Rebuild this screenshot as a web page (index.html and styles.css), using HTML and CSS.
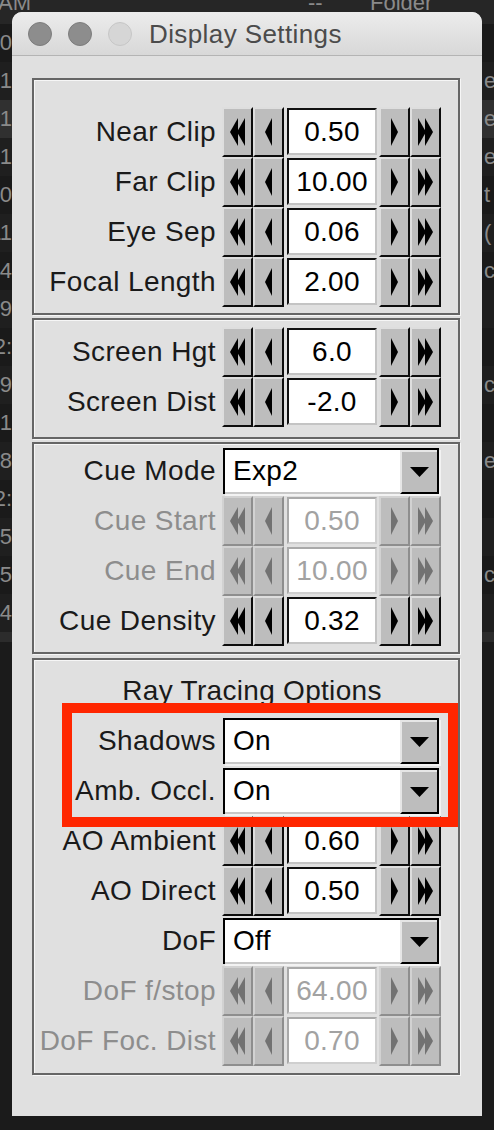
FILE: index.html
```html
<!DOCTYPE html>
<html>
<head>
<meta charset="utf-8">
<link rel="stylesheet" href="styles.css">
</head>
<body>
<div class="desktop">
  <div class="hdr"><span class="h-am">AM</span><span class="h-dash">--</span><span class="h-folder">Folder</span></div>
  <div class="bgrow alt"><div class="lc"><span>12:0</span></div><div class="sp"></div><div class="rc"></div></div>
  <div class="bgrow"><div class="lc"><span>1</span></div><div class="sp"></div><div class="rc">e</div></div>
  <div class="bgrow sel"><div class="lc"><span>1</span></div><div class="sp"></div><div class="rc">e</div></div>
  <div class="bgrow"><div class="lc"><span>1</span></div><div class="sp"></div><div class="rc">e</div></div>
  <div class="bgrow alt"><div class="lc"><span>0</span></div><div class="sp"></div><div class="rc">t</div></div>
  <div class="bgrow"><div class="lc"><span>11</span></div><div class="sp"></div><div class="rc">(</div></div>
  <div class="bgrow alt"><div class="lc"><span>4</span></div><div class="sp"></div><div class="rc">cu</div></div>
  <div class="bgrow"><div class="lc"><span>9</span></div><div class="sp"></div><div class="rc"></div></div>
  <div class="bgrow alt"><div class="lc"><span>2:</span></div><div class="sp"></div><div class="rc"></div></div>
  <div class="bgrow"><div class="lc"><span>9</span></div><div class="sp"></div><div class="rc">c</div></div>
  <div class="bgrow alt"><div class="lc"><span>1</span></div><div class="sp"></div><div class="rc"></div></div>
  <div class="bgrow"><div class="lc"><span>8</span></div><div class="sp"></div><div class="rc">e</div></div>
  <div class="bgrow alt"><div class="lc"><span>2:</span></div><div class="sp"></div><div class="rc"></div></div>
  <div class="bgrow"><div class="lc"><span>:5</span></div><div class="sp"></div><div class="rc"></div></div>
  <div class="bgrow alt"><div class="lc"><span>5</span></div><div class="sp"></div><div class="rc">cu</div></div>
  <div class="bgrow"><div class="lc"><span>:4</span></div><div class="sp"></div><div class="rc"></div></div>
  <div class="hbar"></div>
  <div class="lower"><div class="col1"></div><div class="col2"></div></div>
</div>

<div class="window">
  <div class="titlebar">
    <span class="light dark"></span>
    <span class="light dark"></span>
    <span class="light pale"></span>
    <span class="wtitle">Display Settings</span>
  </div>
  <div class="content">
    <div class="sec s1">
      <div class="row">
        <span class="lbl">Near Clip</span>
        <div class="spin">
          <span class="btn"><svg width="15" height="28" viewBox="0 0 15 28"><polygon points="0,14 8,0 8,28"/><polygon points="7,14 15,0 15,28"/></svg></span>
          <span class="btn"><svg width="7" height="28" viewBox="0 0 7 28"><polygon points="0,14 7,0 7,28"/></svg></span>
          <span class="val">0.50</span>
          <span class="btn"><svg width="7" height="28" viewBox="0 0 7 28"><polygon points="7,14 0,0 0,28"/></svg></span>
          <span class="btn"><svg width="15" height="28" viewBox="0 0 15 28"><polygon points="15,14 7,0 7,28"/><polygon points="8,14 0,0 0,28"/></svg></span>
        </div>
      </div>
      <div class="row">
        <span class="lbl">Far Clip</span>
        <div class="spin">
          <span class="btn"><svg width="15" height="28" viewBox="0 0 15 28"><polygon points="0,14 8,0 8,28"/><polygon points="7,14 15,0 15,28"/></svg></span>
          <span class="btn"><svg width="7" height="28" viewBox="0 0 7 28"><polygon points="0,14 7,0 7,28"/></svg></span>
          <span class="val">10.00</span>
          <span class="btn"><svg width="7" height="28" viewBox="0 0 7 28"><polygon points="7,14 0,0 0,28"/></svg></span>
          <span class="btn"><svg width="15" height="28" viewBox="0 0 15 28"><polygon points="15,14 7,0 7,28"/><polygon points="8,14 0,0 0,28"/></svg></span>
        </div>
      </div>
      <div class="row">
        <span class="lbl">Eye Sep</span>
        <div class="spin">
          <span class="btn"><svg width="15" height="28" viewBox="0 0 15 28"><polygon points="0,14 8,0 8,28"/><polygon points="7,14 15,0 15,28"/></svg></span>
          <span class="btn"><svg width="7" height="28" viewBox="0 0 7 28"><polygon points="0,14 7,0 7,28"/></svg></span>
          <span class="val">0.06</span>
          <span class="btn"><svg width="7" height="28" viewBox="0 0 7 28"><polygon points="7,14 0,0 0,28"/></svg></span>
          <span class="btn"><svg width="15" height="28" viewBox="0 0 15 28"><polygon points="15,14 7,0 7,28"/><polygon points="8,14 0,0 0,28"/></svg></span>
        </div>
      </div>
      <div class="row">
        <span class="lbl">Focal Length</span>
        <div class="spin">
          <span class="btn"><svg width="15" height="28" viewBox="0 0 15 28"><polygon points="0,14 8,0 8,28"/><polygon points="7,14 15,0 15,28"/></svg></span>
          <span class="btn"><svg width="7" height="28" viewBox="0 0 7 28"><polygon points="0,14 7,0 7,28"/></svg></span>
          <span class="val">2.00</span>
          <span class="btn"><svg width="7" height="28" viewBox="0 0 7 28"><polygon points="7,14 0,0 0,28"/></svg></span>
          <span class="btn"><svg width="15" height="28" viewBox="0 0 15 28"><polygon points="15,14 7,0 7,28"/><polygon points="8,14 0,0 0,28"/></svg></span>
        </div>
      </div>
    </div>

    <div class="sec s2">
      <div class="row">
        <span class="lbl">Screen Hgt</span>
        <div class="spin">
          <span class="btn"><svg width="15" height="28" viewBox="0 0 15 28"><polygon points="0,14 8,0 8,28"/><polygon points="7,14 15,0 15,28"/></svg></span>
          <span class="btn"><svg width="7" height="28" viewBox="0 0 7 28"><polygon points="0,14 7,0 7,28"/></svg></span>
          <span class="val">6.0</span>
          <span class="btn"><svg width="7" height="28" viewBox="0 0 7 28"><polygon points="7,14 0,0 0,28"/></svg></span>
          <span class="btn"><svg width="15" height="28" viewBox="0 0 15 28"><polygon points="15,14 7,0 7,28"/><polygon points="8,14 0,0 0,28"/></svg></span>
        </div>
      </div>
      <div class="row">
        <span class="lbl">Screen Dist</span>
        <div class="spin">
          <span class="btn"><svg width="15" height="28" viewBox="0 0 15 28"><polygon points="0,14 8,0 8,28"/><polygon points="7,14 15,0 15,28"/></svg></span>
          <span class="btn"><svg width="7" height="28" viewBox="0 0 7 28"><polygon points="0,14 7,0 7,28"/></svg></span>
          <span class="val">-2.0</span>
          <span class="btn"><svg width="7" height="28" viewBox="0 0 7 28"><polygon points="7,14 0,0 0,28"/></svg></span>
          <span class="btn"><svg width="15" height="28" viewBox="0 0 15 28"><polygon points="15,14 7,0 7,28"/><polygon points="8,14 0,0 0,28"/></svg></span>
        </div>
      </div>
    </div>

    <div class="sec s3">
      <div class="row">
        <span class="lbl">Cue Mode</span>
        <div class="drop">
          <span class="field">Exp2</span>
          <span class="dbtn"><svg width="19" height="10" viewBox="0 0 19 10"><polygon points="0,0 19,0 9.5,10"/></svg></span>
        </div>
      </div>
      <div class="row off">
        <span class="lbl">Cue Start</span>
        <div class="spin">
          <span class="btn"><svg width="15" height="28" viewBox="0 0 15 28"><polygon points="0,14 8,0 8,28"/><polygon points="7,14 15,0 15,28"/></svg></span>
          <span class="btn"><svg width="7" height="28" viewBox="0 0 7 28"><polygon points="0,14 7,0 7,28"/></svg></span>
          <span class="val">0.50</span>
          <span class="btn"><svg width="7" height="28" viewBox="0 0 7 28"><polygon points="7,14 0,0 0,28"/></svg></span>
          <span class="btn"><svg width="15" height="28" viewBox="0 0 15 28"><polygon points="15,14 7,0 7,28"/><polygon points="8,14 0,0 0,28"/></svg></span>
        </div>
      </div>
      <div class="row off">
        <span class="lbl">Cue End</span>
        <div class="spin">
          <span class="btn"><svg width="15" height="28" viewBox="0 0 15 28"><polygon points="0,14 8,0 8,28"/><polygon points="7,14 15,0 15,28"/></svg></span>
          <span class="btn"><svg width="7" height="28" viewBox="0 0 7 28"><polygon points="0,14 7,0 7,28"/></svg></span>
          <span class="val">10.00</span>
          <span class="btn"><svg width="7" height="28" viewBox="0 0 7 28"><polygon points="7,14 0,0 0,28"/></svg></span>
          <span class="btn"><svg width="15" height="28" viewBox="0 0 15 28"><polygon points="15,14 7,0 7,28"/><polygon points="8,14 0,0 0,28"/></svg></span>
        </div>
      </div>
      <div class="row">
        <span class="lbl">Cue Density</span>
        <div class="spin">
          <span class="btn"><svg width="15" height="28" viewBox="0 0 15 28"><polygon points="0,14 8,0 8,28"/><polygon points="7,14 15,0 15,28"/></svg></span>
          <span class="btn"><svg width="7" height="28" viewBox="0 0 7 28"><polygon points="0,14 7,0 7,28"/></svg></span>
          <span class="val">0.32</span>
          <span class="btn"><svg width="7" height="28" viewBox="0 0 7 28"><polygon points="7,14 0,0 0,28"/></svg></span>
          <span class="btn"><svg width="15" height="28" viewBox="0 0 15 28"><polygon points="15,14 7,0 7,28"/><polygon points="8,14 0,0 0,28"/></svg></span>
        </div>
      </div>
    </div>

    <div class="sec s4">
      <div class="sectitle">Ray Tracing Options</div>
      <div class="row">
        <span class="lbl">Shadows</span>
        <div class="drop">
          <span class="field">On</span>
          <span class="dbtn"><svg width="19" height="10" viewBox="0 0 19 10"><polygon points="0,0 19,0 9.5,10"/></svg></span>
        </div>
      </div>
      <div class="row">
        <span class="lbl">Amb. Occl.</span>
        <div class="drop">
          <span class="field">On</span>
          <span class="dbtn"><svg width="19" height="10" viewBox="0 0 19 10"><polygon points="0,0 19,0 9.5,10"/></svg></span>
        </div>
      </div>
      <div class="row">
        <span class="lbl">AO Ambient</span>
        <div class="spin">
          <span class="btn"><svg width="15" height="28" viewBox="0 0 15 28"><polygon points="0,14 8,0 8,28"/><polygon points="7,14 15,0 15,28"/></svg></span>
          <span class="btn"><svg width="7" height="28" viewBox="0 0 7 28"><polygon points="0,14 7,0 7,28"/></svg></span>
          <span class="val">0.60</span>
          <span class="btn"><svg width="7" height="28" viewBox="0 0 7 28"><polygon points="7,14 0,0 0,28"/></svg></span>
          <span class="btn"><svg width="15" height="28" viewBox="0 0 15 28"><polygon points="15,14 7,0 7,28"/><polygon points="8,14 0,0 0,28"/></svg></span>
        </div>
      </div>
      <div class="row">
        <span class="lbl">AO Direct</span>
        <div class="spin">
          <span class="btn"><svg width="15" height="28" viewBox="0 0 15 28"><polygon points="0,14 8,0 8,28"/><polygon points="7,14 15,0 15,28"/></svg></span>
          <span class="btn"><svg width="7" height="28" viewBox="0 0 7 28"><polygon points="0,14 7,0 7,28"/></svg></span>
          <span class="val">0.50</span>
          <span class="btn"><svg width="7" height="28" viewBox="0 0 7 28"><polygon points="7,14 0,0 0,28"/></svg></span>
          <span class="btn"><svg width="15" height="28" viewBox="0 0 15 28"><polygon points="15,14 7,0 7,28"/><polygon points="8,14 0,0 0,28"/></svg></span>
        </div>
      </div>
      <div class="row">
        <span class="lbl">DoF</span>
        <div class="drop">
          <span class="field">Off</span>
          <span class="dbtn"><svg width="19" height="10" viewBox="0 0 19 10"><polygon points="0,0 19,0 9.5,10"/></svg></span>
        </div>
      </div>
      <div class="row off">
        <span class="lbl">DoF f/stop</span>
        <div class="spin">
          <span class="btn"><svg width="15" height="28" viewBox="0 0 15 28"><polygon points="0,14 8,0 8,28"/><polygon points="7,14 15,0 15,28"/></svg></span>
          <span class="btn"><svg width="7" height="28" viewBox="0 0 7 28"><polygon points="0,14 7,0 7,28"/></svg></span>
          <span class="val">64.00</span>
          <span class="btn"><svg width="7" height="28" viewBox="0 0 7 28"><polygon points="7,14 0,0 0,28"/></svg></span>
          <span class="btn"><svg width="15" height="28" viewBox="0 0 15 28"><polygon points="15,14 7,0 7,28"/><polygon points="8,14 0,0 0,28"/></svg></span>
        </div>
      </div>
      <div class="row off">
        <span class="lbl">DoF Foc. Dist</span>
        <div class="spin">
          <span class="btn"><svg width="15" height="28" viewBox="0 0 15 28"><polygon points="0,14 8,0 8,28"/><polygon points="7,14 15,0 15,28"/></svg></span>
          <span class="btn"><svg width="7" height="28" viewBox="0 0 7 28"><polygon points="0,14 7,0 7,28"/></svg></span>
          <span class="val">0.70</span>
          <span class="btn"><svg width="7" height="28" viewBox="0 0 7 28"><polygon points="7,14 0,0 0,28"/></svg></span>
          <span class="btn"><svg width="15" height="28" viewBox="0 0 15 28"><polygon points="15,14 7,0 7,28"/><polygon points="8,14 0,0 0,28"/></svg></span>
        </div>
      </div>
    </div>
  </div>
  <div class="highlight"></div>
</div>
</body>
</html>
```

FILE: styles.css
```css
html, body {
  margin: 0;
  padding: 0;
}
body {
  width: 494px;
  height: 1130px;
  overflow: hidden;
  background: #1b1b1b;
  font-family: "Liberation Sans", Arial, sans-serif;
  position: relative;
}

/* ---------- desktop behind the window ---------- */
.desktop {
  width: 494px;
  height: 1130px;
  color: #8a8a8a;
  font-size: 22px;
}
.hdr {
  height: 24px;
  background: #262626;
  display: flex;
  align-items: flex-start;
  white-space: nowrap;
  overflow: hidden;
}
.hdr span {
  display: block;
  line-height: 24px;
  margin-top: -9px;
}
.h-am { margin-left: -2px; width: 310px; }
.h-dash { width: 62px; }
.bgrow {
  height: 38px;
  display: flex;
  align-items: center;
  background: #1f1f1f;
  white-space: nowrap;
}
.bgrow.alt { background: #1a1a1a; }
.bgrow.sel { background: #303030; }
.lc {
  width: 12px;
  display: flex;
  justify-content: flex-end;
}
.sp { flex: 1; }
.rc {
  width: 10px;
  overflow: visible;
}
.hbar {
  height: 10px;
  background: #2c2c2c;
}
.lower {
  height: 460px;
  display: flex;
}
.col1 { width: 195px; border-right: 1px solid #2a2a2a; }
.col2 { width: 25px; border-right: 1px solid #2a2a2a; }

/* ---------- window ---------- */
.window {
  position: absolute;
  left: 12px;
  top: 12px;
  width: 470px;
  height: 1104px;
  background: #e0e0e0;
  border-radius: 10px 10px 0 0;
  overflow: hidden;
}
.titlebar {
  height: 42px;
  border-bottom: 1px solid #b4b4b4;
  background: linear-gradient(#ececec, #d8d8d8);
  display: flex;
  align-items: center;
  padding: 1px 0 0 16px;
  box-sizing: content-box;
}
.light {
  width: 22px;
  height: 22px;
  border-radius: 50%;
  margin-right: 16px;
  border: 1px solid #7d7d7d;
  background: #8d8d8d;
  flex: none;
}
.light.pale {
  background: #d6d6d6;
  border-color: #c6c6c6;
  margin-right: 17px;
}
.wtitle {
  font-size: 26px;
  color: #4b4b4b;
  letter-spacing: 0.4px;
}

.content {
  padding: 22px 0 0 20px;
}
.sec {
  width: 428px;
  box-sizing: border-box;
  border: 2px solid #666666;
  box-shadow: 1px 1px 0 #f6f6f6, inset 1px 1px 0 #f6f6f6;
}
.s1 { height: 237px; padding-top: 27px; }
.s2 { height: 121px; padding-top: 7px; margin-top: 3px; }
.s3 { height: 212px; padding-top: 2px; margin-top: 3px; }
.s4 { height: 417px; padding-top: 6px; margin-top: 4px; }

.sectitle {
  height: 50px;
  line-height: 50px;
  font-size: 28px;
  letter-spacing: 0.3px;
  color: #1a1a1a;
  text-align: center;
  padding-left: 12px;
}

.row {
  height: 50px;
  display: grid;
  grid-template-columns: 182px auto;
  column-gap: 6px;
  align-items: center;
}
.lbl {
  font-size: 28px;
  line-height: 50px;
  letter-spacing: 0.4px;
  color: #1a1a1a;
  text-align: right;
  white-space: nowrap;
}
.row.off .lbl { color: #8d8d8d; }

/* spinner */
.spin {
  display: flex;
  height: 50px;
}
.btn {
  width: 31px;
  height: 50px;
  box-sizing: border-box;
  background: #bdbdbd;
  border-style: solid;
  border-width: 2px;
  border-color: #dedede #0d0d0d #0d0d0d #dedede;
  display: flex;
  align-items: center;
  justify-content: center;
  flex: none;
}
.btn svg { fill: #000; display: block; }
.val {
  width: 90px;
  height: 47px;
  margin: 1px 2px 2px 3px;
  box-sizing: border-box;
  background: #ffffff;
  border-style: solid;
  border-width: 2px;
  border-color: #111 #c4c4c4 #c4c4c4 #111;
  font-size: 28px;
  line-height: 43px;
  letter-spacing: 0.3px;
  text-align: center;
  color: #000;
  flex: none;
}
.row.off .btn {
  border-color: #d2d2d2 #8e8e8e #8e8e8e #d2d2d2;
}
.row.off .btn svg { fill: #727272; }
.row.off .val {
  border-color: #a9a9a9 #cfcfcf #cfcfcf #a9a9a9;
  color: #a2a2a2;
}

/* dropdown */
.drop {
  width: 216px;
  height: 46px;
  margin-left: 1px;
  box-sizing: border-box;
  display: flex;
  border-top: 2px solid #000;
  border-left: 2px solid #000;
  border-right: 2px solid #000;
  box-shadow: 2px 2px 0 #f2f2f2;
}
.field {
  flex: 1;
  background: #fff;
  border-bottom: 2px solid #c8c8c8;
  font-size: 28px;
  line-height: 42px;
  letter-spacing: 0.3px;
  padding-left: 8px;
  color: #000;
}
.dbtn {
  width: 37px;
  box-sizing: border-box;
  background: #bdbdbd;
  border-top: 2px solid #e6e6e6;
  border-left: 2px solid #e6e6e6;
  border-bottom: 2px solid #000;
  display: flex;
  align-items: center;
  justify-content: center;
}
.dbtn svg { fill: #000; display: block; }

/* red annotation */
.highlight {
  position: absolute;
  left: 50px;
  top: 691px;
  width: 396px;
  height: 124px;
  box-sizing: border-box;
  border: 10px solid #ff2600;
}
```
